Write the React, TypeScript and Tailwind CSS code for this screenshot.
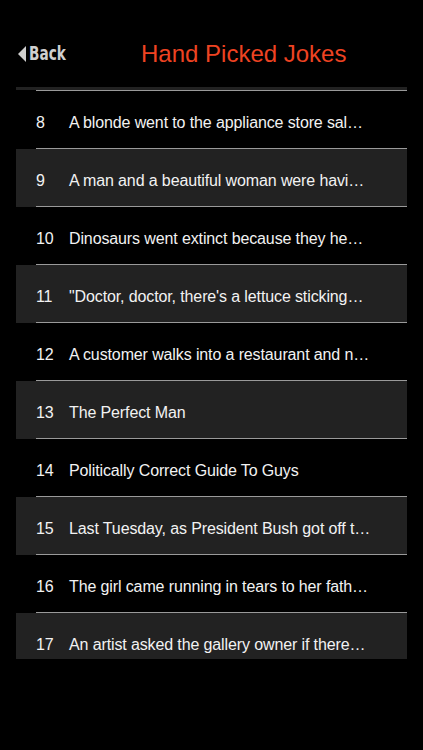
const jokes = [
  { n: 8, title: "A blonde went to the appliance store sal…" },
  { n: 9, title: "A man and a beautiful woman were havi…" },
  { n: 10, title: "Dinosaurs went extinct because they he…" },
  { n: 11, title: "\"Doctor, doctor, there's a lettuce sticking…" },
  { n: 12, title: "A customer walks into a restaurant and n…" },
  { n: 13, title: "The Perfect Man" },
  { n: 14, title: "Politically Correct Guide To Guys" },
  { n: 15, title: "Last Tuesday, as President Bush got off t…" },
  { n: 16, title: "The girl came running in tears to her fath…" },
  { n: 17, title: "An artist asked the gallery owner if there…" },
];

export default function App() {
  return (
    <div
      className="w-[423px] h-[750px] bg-black overflow-hidden"
      style={{ fontFamily: '"Liberation Sans", Arial, sans-serif' }}
    >
      {/* nav bar */}
      <div className="h-[87px] pt-[20px] flex items-center">
        <div className="w-[45px] flex items-center ml-[18px] text-[#cfcfcf]">
          <svg width="8" height="16" viewBox="0 0 8 16" className="mr-[3px] shrink-0">
            <path d="M8 0 L8 16 L0 8 Z" fill="#cfcfcf" />
          </svg>
          <span
            className="inline-block text-[19px] font-bold leading-none origin-left scale-x-[0.8] whitespace-nowrap"
            style={{ fontFamily: '"DejaVu Sans Condensed", "DejaVu Sans", sans-serif' }}
          >
            Back
          </span>
        </div>
        <div className="ml-[78px] text-[24px] leading-none text-[#ee4322] whitespace-nowrap">Hand Picked Jokes</div>
      </div>

      {/* list */}
      <div className="mx-[16px] h-[572px] overflow-hidden">
        <div className="h-[3px] bg-[#222222]" />
        <div className="ml-[20px] h-px bg-[#9a9a9a]" />
        {jokes.map((j) => (
          <div key={j.n} className={j.n % 2 === 1 ? "bg-[#222222]" : ""}>
            <div className="h-[57px] pt-[22px] pl-[20px] flex text-[16px] leading-[20px] tracking-[-0.12px] text-[#f2f2f2] whitespace-nowrap">
              <span className="w-[33px] shrink-0">{j.n}</span>
              <span>{j.title}</span>
            </div>
            <div className="ml-[20px] h-px bg-[#9a9a9a]" />
          </div>
        ))}
      </div>
    </div>
  );
}
